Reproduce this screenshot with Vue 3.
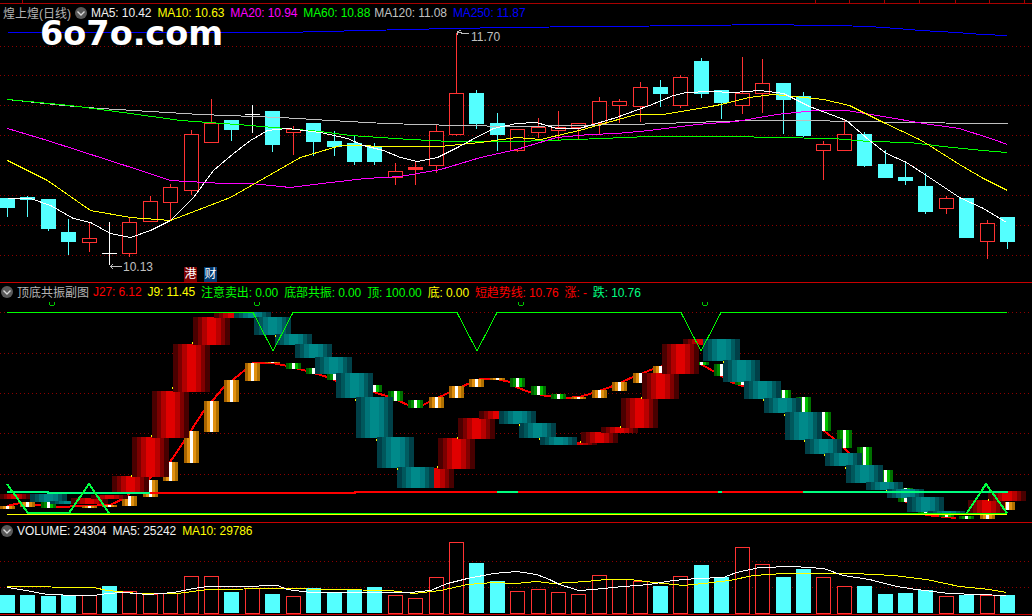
<template>
  <div class="screen">
    <!-- K线主图 -->
    <section class="pane pane-main">
      <svg class="ruler" width="1032" height="4" shape-rendering="crispEdges">
        <line x1="0" y1="3.5" x2="1032" y2="3.5" class="line-frame" />
        <line v-for="x in rulerTicks" :key="x" :x1="x + 0.5" y1="0" :x2="x + 0.5" y2="3" class="line-frame" />
      </svg>
      <div class="legend legend-main">
        <span class="title">煌上煌(日线)</span>
        <svg class="chev chev-main" width="14" height="14" viewBox="0 0 14 14"><circle cx="7" cy="7" r="6" fill="#5a5a5a" /><path d="M3.5 5.5 7 9l3.5-3.5" fill="none" stroke="#d8d8d8" stroke-width="1.4" /></svg>
        <span v-for="m in mainLegend" :key="m.label" class="item" :class="m.cls">{{ m.label }}: {{ m.value }}</span>
      </div>
      <svg class="chart" width="1032" height="259" viewBox="0 23 1032 259" shape-rendering="crispEdges">
        <line v-for="y in mainGrid" :key="y" x1="0" :y1="y + 0.5" x2="1032" :y2="y + 0.5" class="grid" />
        <g v-for="c in candleBars" :key="c.i">
          <line :x1="c.mid" :y1="c.hi" :x2="c.mid" :y2="c.lo" :class="c.wick" />
          <rect v-if="c.kind === 'r'" :x="c.x + 0.5" :y="c.top + 0.5" width="14" :height="c.h" :class="c.body" />
          <rect v-else-if="c.kind === 'c'" :x="c.x" :y="c.top" width="15" :height="c.h" class="body-cyan" />
          <line v-else :x1="c.x" :y1="c.top + 0.5" :x2="c.x + 15" :y2="c.top + 0.5" class="wick-white" />
        </g>
        <g transform="translate(0.5 0.5)">
          <polyline :points="maBlue" class="ma blue" />
          <polyline :points="maGray" class="ma gray" />
          <polyline :points="maGreen" class="ma green" />
          <polyline :points="maMagenta" class="ma magenta" />
          <polyline :points="maYellow" class="ma yellow" />
          <polyline :points="maWhite" class="ma white" />
        </g>
        <path d="M457.5 31v4M457.5 32l4 1h7M457.5 32l3-2" class="mark" />
        <text x="471" y="41" class="price">11.70</text>
        <path d="M110 266.5h12M110 266.5l3-2M110 266.5l3 2" class="mark" />
        <text x="123" y="271" class="price">10.13</text>
      </svg>
      <div class="watermark">6o7o.com</div>
      <div class="badges"><span class="badge badge-hk">港</span><span class="badge badge-fin">财</span></div>
    </section>

    <!-- 顶底共振副图 -->
    <section class="pane pane-sub">
      <div class="legend legend-sub">
        <svg class="chev" width="14" height="14" viewBox="0 0 14 14"><circle cx="7" cy="7" r="6" fill="#5a5a5a" /><path d="M3.5 5.5 7 9l3.5-3.5" fill="none" stroke="#d8d8d8" stroke-width="1.4" /></svg>
        <span class="title title-sub">顶底共振副图</span>
        <span v-for="m in subLegend" :key="m.label" class="item" :class="m.cls">{{ m.label }}: {{ m.value }}</span>
      </div>
      <svg class="chart" width="1032" height="222" viewBox="0 300 1032 222" shape-rendering="crispEdges">
        <defs>
          <linearGradient v-for="g in gradients" :id="g.id" :key="g.id" x1="0" x2="1" y1="0" y2="0">
            <template v-for="(color, n) in g.colors" :key="n">
              <stop :offset="n / g.colors.length" :stop-color="color" />
              <stop :offset="(n + 1) / g.colors.length" :stop-color="color" />
            </template>
          </linearGradient>
        </defs>
        <line v-for="y in subGrid" :key="y" x1="0" :y1="y + 0.5" x2="1032" :y2="y + 0.5" class="grid" />
        <polyline :points="trendLine" class="trend" />
        <rect v-for="s in smallBlocks" :key="s.x" :x="s.x" :y="s.y" width="15" :height="s.h" :fill="s.fill" />
        <rect v-for="b in wideBlocks" :key="b.key" :x="b.x" :y="b.y" :width="b.w" :height="b.h" :fill="b.fill" />
        <rect v-for="t in cornerTicks" :key="t[0]" :x="t[0]" :y="t[1]" width="1" height="2" class="tick" />
        <polyline points="7,492 48,492 48,493 150,493" class="band spring" />
        <polyline points="150,493 355,493 355,492 497,492" class="band hot" />
        <polyline points="497,492 518,492" class="band spring" />
        <polyline points="518,492 718,492" class="band hot" />
        <polyline points="718,492 722,492" class="band spring" />
        <polyline points="722,492 803,492" class="band hot" />
        <polyline points="803,492 1008,492" class="band spring" />
        <line x1="7" y1="514.5" x2="1007" y2="514.5" class="ma yellow" />
        <line x1="28" y1="513.5" x2="1007" y2="513.5" class="ma lime" />
        <polyline points="7,312.5 253,312.5 273,351 293,312.5 457,312.5 477,351 497,312.5 681,312.5 701,351 721,312.5 1007,312.5" class="ma lime" />
        <polyline points="7,484 28,513 69,513 89,484 109,513" class="tri" />
        <polyline points="967,513 986,484 1007,513" class="tri" />
        <path v-for="x in cupMarks" :key="x" :d="`M${x}.5 302V305M${x + 1} 305.5H${x + 5}M${x + 5}.5 305V302`" class="cup" />
      </svg>
    </section>

    <!-- 成交量 -->
    <section class="pane pane-volume">
      <div class="legend legend-volume">
        <svg class="chev" width="14" height="14" viewBox="0 0 14 14"><circle cx="7" cy="7" r="6" fill="#5a5a5a" /><path d="M3.5 5.5 7 9l3.5-3.5" fill="none" stroke="#d8d8d8" stroke-width="1.4" /></svg>
        <span class="item white-text">VOLUME: 24304</span>
        <span class="item white-text">MA5: 25242</span>
        <span class="item yellow-text">MA10: 29786</span>
      </div>
      <svg class="chart" width="1032" height="74" viewBox="0 540 1032 74" shape-rendering="crispEdges">
        <line v-for="y in [561, 587]" :key="y" x1="0" :y1="y + 0.5" x2="1032" :y2="y + 0.5" class="grid" />
        <template v-for="b in volumeBars" :key="b.x">
          <rect v-if="b.up" :x="b.x + 0.5" :y="b.y + 0.5" width="14" :height="b.h" class="vol-up" />
          <rect v-else :x="b.x" :y="b.y" width="15" :height="b.h" class="vol-down" />
        </template>
        <g transform="translate(0.5 0.5)">
          <polyline :points="volYellow" class="ma yellow" />
          <polyline :points="volWhite" class="ma white" />
        </g>
      </svg>
    </section>
  </div>
</template>

<script setup>
const STEP = 20.408
const left = (i) => Math.round(i * STEP)

const rulerTicks = [22, 815, 849, 884, 919, 955, 989, 1024]
const mainGrid = [46, 75, 105, 135, 165, 195, 225, 255]
const subGrid = [312, 353, 393, 433, 474]

const mainLegend = [
  { label: 'MA5', value: '10.42', cls: 'white-text' },
  { label: 'MA10', value: '10.63', cls: 'yellow-text' },
  { label: 'MA20', value: '10.94', cls: 'magenta-text' },
  { label: 'MA60', value: '10.88', cls: 'green-text' },
  { label: 'MA120', value: '11.08', cls: 'gray-text narrow' },
  { label: 'MA250', value: '11.87', cls: 'blue-text' }
]

const subLegend = [
  { label: 'J27', value: '6.12', cls: 'red-text' },
  { label: 'J9', value: '11.45', cls: 'yellow-text' },
  { label: '注意卖出', value: '0.00', cls: 'green-text' },
  { label: '底部共振', value: '0.00', cls: 'green-text' },
  { label: '顶', value: '100.00', cls: 'green-text' },
  { label: '底', value: '0.00', cls: 'yellow-text' },
  { label: '短趋势线', value: '10.76', cls: 'red-text' },
  { label: '涨', value: '-', cls: 'red-text' },
  { label: '跌', value: '10.76', cls: 'spring-text' }
]

// top, bottom, high, low, kind (r 阳线, c 阴线, w 十字星)
const candles = [
  [198, 207, 198, 217, 'c'], [197, 199, 196, 217, 'c'], [199, 228, 199, 231, 'c'], [232, 241, 219, 255, 'c'],
  [238, 242, 223, 252, 'r'], [253, 253, 222, 265, 'w'], [222, 253, 217, 257, 'r'], [201, 221, 196, 221, 'r'],
  [187, 202, 184, 220, 'r'], [134, 190, 130, 195, 'r'], [123, 142, 99, 142, 'r'], [120, 129, 120, 141, 'c'],
  [114, 114, 105, 133, 'w'], [111, 144, 111, 152, 'c'], [129, 132, 126, 155, 'r'], [123, 141, 123, 156, 'c'],
  [141, 146, 131, 156, 'c'], [143, 161, 135, 165, 'c'], [146, 161, 143, 165, 'c'], [171, 177, 163, 185, 'r'],
  [167, 169, 162, 185, 'r'], [131, 165, 125, 173, 'r'], [93, 134, 33, 136, 'r'], [93, 123, 90, 129, 'c'],
  [123, 134, 113, 151, 'c'], [129, 150, 129, 152, 'r'], [127, 132, 118, 138, 'r'], [127, 130, 111, 140, 'r'],
  [123, 127, 123, 140, 'r'], [101, 123, 97, 135, 'r'], [101, 105, 99, 123, 'r'], [87, 106, 82, 122, 'r'],
  [87, 93, 80, 107, 'c'], [77, 105, 75, 108, 'r'], [61, 93, 58, 98, 'c'], [90, 102, 90, 119, 'c'],
  [93, 105, 57, 114, 'r'], [83, 93, 59, 113, 'r'], [83, 99, 83, 134, 'c'], [96, 135, 92, 137, 'c'],
  [144, 150, 141, 180, 'r'], [134, 150, 120, 150, 'r'], [134, 165, 132, 167, 'c'], [164, 177, 150, 177, 'c'],
  [177, 180, 161, 185, 'c'], [186, 211, 173, 214, 'c'], [198, 208, 196, 214, 'r'], [198, 237, 198, 237, 'c'],
  [223, 241, 220, 259, 'r'], [217, 241, 217, 249, 'c']
]

const candleBars = candles.map(([top, bottom, hi, lo, kind], i) => {
  const x = left(i)
  const isRed = kind === 'r'
  return {
    i, x, kind, top, hi, lo,
    mid: x + 7.5,
    h: isRed ? bottom - top : bottom - top + 1,
    wick: kind === 'w' ? 'wick-white' : isRed ? 'wick-red' : 'wick-cyan',
    body: bottom - top < 3 ? 'body-solid' : 'body-red'
  }
})

const maBlue = '7,32 283,32 323,31 365,30 450,28 510,27 589,26 711,25 752,24 834,25 869,26 896,28 921,30 956,32 982,34 1007,35'
const maGray = '7,99 63,105 100,108 200,114 280,117 330,120 385,123 456,125 516,126 629,124 691,122 749,120 809,120 849,121 976,123 1007,123'
const maGreen = '7,99 70,105 130,113 180,120 250,125 320,131 350,135 410,139 450,141 516,141 576,139 649,136 733,136 773,137 832,138 869,141 909,142 943,146 982,150 1007,152'
const maMagenta = '7,128 47,140 140,170 170,180 223,183 250,183 290,187 330,182 365,178 400,176 440,169 480,157 516,149 556,137 589,134 616,133 649,130 696,124 736,121 776,114 816,110 846,110 883,116 923,123 959,128 993,139 1007,144'
const maYellow = '7,160 47,180 90,210 130,217 170,220 230,197 300,157 340,145 400,146 440,146 480,142 516,137 540,139 583,129 596,125 636,114 663,114 716,105 749,97 773,94 793,96 823,99 849,105 883,122 919,139 929,145 959,164 983,178 1007,190'
const maWhite = '7,198 30,198 50,205 73,218 90,222 110,233 130,237 150,230 170,220 193,197 213,170 233,153 250,140 267,130 287,128 320,132 347,138 363,145 383,150 400,157 417,161 437,157 457,147 470,140 493,128 516,123 536,122 556,128 579,128 596,123 616,117 649,105 673,95 686,92 709,91 733,92 759,90 783,93 809,106 846,120 869,140 886,153 906,162 926,175 959,197 983,208 1006,222'

const RED_BANDS = ['#4a0000', '#7a0000', '#b00000', '#e00000', '#e00000', '#b80000', '#800000', '#480000']
const TEAL_BANDS = ['#004048', '#00585c', '#007478', '#008a8a', '#008a8a', '#007c80', '#005c60', '#004048']
const ORANGE_BANDS = ['#a86400', '#e09010', '#ffffff', '#e09010', '#b07000']
const GREEN_BANDS = ['#006000', '#009000', '#ffffff', '#00c000', '#007000']

const gradients = [
  { id: 'gr', colors: RED_BANDS },
  { id: 'gt', colors: TEAL_BANDS },
  { id: 'go', colors: ORANGE_BANDS },
  { id: 'gg', colors: GREEN_BANDS }
]

// x1, x2, y1, y2, kind
const wide = [
  [0, 30, 494, 499, 'r'], [30, 67, 494, 502, 't'], [50, 87, 501, 504, 't'], [71, 108, 498, 504, 'r'], [91, 128, 495, 499, 'r'],
  [112, 149, 476, 492, 'r'], [132, 169, 437, 477, 'r'], [152, 189, 391, 438, 'r'], [173, 210, 344, 392, 'r'], [193, 230, 317, 345, 'r'],
  [214, 251, 313, 318, 'r'], [234, 271, 312, 318, 't'], [254, 291, 317, 335, 't'], [275, 312, 334, 345, 't'], [295, 332, 344, 358, 't'],
  [315, 352, 357, 374, 't'], [336, 373, 373, 398, 't'], [356, 393, 397, 438, 't'], [377, 414, 437, 468, 't'], [417, 454, 468, 488, 'r'],
  [397, 434, 467, 488, 't'], [438, 475, 438, 469, 'r'], [458, 495, 418, 439, 'r'], [479, 516, 411, 419, 'r'], [499, 536, 411, 424, 't'],
  [519, 556, 423, 438, 't'], [560, 597, 442, 445, 'r'], [540, 577, 437, 445, 't'], [581, 618, 432, 443, 'r'], [601, 638, 427, 433, 'r'],
  [621, 658, 398, 428, 'r'], [642, 679, 373, 399, 'r'], [683, 720, 339, 345, 'r'], [662, 699, 344, 374, 'r'], [703, 740, 339, 361, 't'],
  [723, 760, 360, 382, 't'], [744, 781, 381, 399, 't'], [764, 801, 398, 413, 't'], [785, 822, 412, 440, 't'], [805, 842, 439, 454, 't'],
  [825, 862, 453, 466, 't'], [846, 883, 465, 483, 't'], [866, 903, 482, 490, 't'], [887, 924, 489, 498, 't'], [907, 944, 497, 512, 't'],
  [928, 965, 511, 514, 't'], [968, 1005, 500, 514, 'r'], [988, 1026, 491, 501, 'r']
]

const wideBlocks = wide.map(([x1, x2, y1, y2, kind], n) => ({
  key: n, x: x1, y: y1, w: x2 - x1, h: y2 - y1,
  fill: kind === 'r' ? 'url(#gr)' : 'url(#gt)'
}))

// index, y1, y2, kind
const small = [
  [0, 506, 509, 'o'], [1, 502, 507, 'o'], [2, 502, 508, 'g'], [4, 506, 508, 'o'], [5, 505, 507, 'o'], [6, 496, 506, 'o'],
  [7, 480, 497, 'o'], [8, 462, 481, 'o'], [9, 431, 463, 'o'], [10, 401, 432, 'o'], [11, 380, 402, 'o'], [12, 363, 381, 'o'],
  [13, 362, 363, 'o'], [14, 363, 369, 'g'], [15, 368, 374, 'g'], [16, 374, 380, 'g'], [18, 385, 392, 'g'], [19, 391, 401, 'g'],
  [20, 400, 408, 'g'], [21, 397, 408, 'o'], [22, 386, 398, 'o'], [23, 379, 387, 'o'], [24, 378, 380, 'o'], [25, 378, 387, 'g'],
  [26, 386, 395, 'g'], [27, 394, 399, 'g'], [28, 397, 399, 'o'], [29, 390, 398, 'o'], [30, 382, 391, 'o'], [31, 373, 383, 'o'],
  [32, 366, 373, 'o'], [34, 362, 365, 'g'], [35, 364, 376, 'g'], [36, 382, 385, 'g'], [38, 390, 398, 'g'], [39, 397, 412, 'g'],
  [40, 412, 431, 'g'], [41, 430, 448, 'g'], [42, 447, 465, 'g'], [43, 470, 482, 'g'], [44, 488, 502, 'g'], [45, 512, 514, 'g'],
  [46, 514, 517, 'g'], [47, 516, 519, 'g'], [48, 514, 519, 'o'], [49, 502, 510, 'o']
]

const smallBlocks = small.map(([i, y1, y2, kind]) => ({
  x: left(i), y: y1, h: y2 - y1,
  fill: kind === 'o' ? 'url(#go)' : 'url(#gg)'
}))

const trendLine = '7,506 20,503 57,507 110,505 123,499 150,478 170,462 183,443 203,412 223,388 245,370 253,363 273,363 287,366 307,371 327,377 353,388 373,392 390,397 408,405 423,405 448,393 470,383 480,379 497,379 510,382 516,387 529,392 546,396 566,398 579,397 593,393 613,386 633,377 653,369 663,366 699,363 713,371 733,383 743,386 823,430 833,438 849,453 903,500 926,515 956,518'

const cornerTicks = [
  [192, 342], [172, 387], [151, 435], [131, 475], [275, 335], [355, 399], [376, 439], [397, 468], [437, 466], [457, 437],
  [519, 424], [539, 438], [580, 441], [620, 426], [641, 397], [723, 361], [763, 399], [784, 414], [804, 440], [824, 454],
  [845, 467], [886, 490], [988, 499]
]

const cupMarks = [49, 254, 518, 702]

const volumeTops = [
  595, 595, 596, 595, 595, 586, 591, 594, 593, 576, 576, 592, 588, 594, 596, 588, 593, 589, 587, 595, 598, 577, 542, 563, 581,
  591, 589, 592, 594, 575, 579, 581, 586, 576, 565, 577, 547, 564, 577, 569, 577, 586, 586, 594, 593, 590, 596, 595, 595, 595
]

const RED_VOLUME = [4, 6, 7, 8, 9, 10, 12, 14, 19, 20, 21, 22, 25, 26, 27, 28, 29, 30, 31, 33, 36, 37, 40, 41, 46, 48]

const volumeBars = volumeTops.map((y, i) => ({
  x: left(i), y, h: 613 - y, up: RED_VOLUME.includes(i)
}))

const volWhite = '7,587 20,589 47,594 77,595 93,595 107,593 123,592 147,594 173,592 193,588 207,586 242,586 277,585 287,589 310,592 363,592 383,592 410,592 430,590 447,583 467,578 493,573 516,571 536,574 549,579 559,584 578,590 593,589 623,586 649,584 673,580 696,578 723,577 736,572 759,567 793,566 823,568 843,575 869,579 896,586 916,589 949,593 1006,595'
const volYellow = '7,586 93,587 107,590 137,593 177,593 207,589 280,588 333,589 390,590 413,593 440,590 467,584 493,582 516,583 536,581 553,583 586,581 606,579 629,579 653,582 683,585 703,583 729,580 753,575 783,573 816,573 853,573 893,575 926,579 959,586 989,589 1006,592'
</script>

<style>
html,
body {
  background: #000;
}
</style>

<style scoped>
.screen {
  width: 1032px;
  height: 616px;
  background: #000;
  overflow: hidden;
  display: flex;
  flex-direction: column;
  font-family: "Liberation Sans", "Noto Sans CJK SC", sans-serif;
  font-size: 12px;
}

.pane {
  position: relative;
  display: flex;
  flex-direction: column;
  box-sizing: border-box;
  border-bottom: 1px solid #c80000;
  flex: none;
}

.pane-main {
  height: 283px;
}

.pane-sub {
  height: 240px;
}

.pane-volume {
  height: 92px;
}

.ruler,
.chart {
  display: block;
  flex: none;
}

.legend {
  display: flex;
  align-items: center;
  gap: 6px;
  white-space: nowrap;
  flex: none;
  box-sizing: border-box;
}

.legend-main {
  height: 19px;
  padding: 0 0 2px 3px;
}

.legend-sub {
  height: 17px;
}

.legend-volume {
  height: 17px;
  padding-bottom: 2px;
}

.title {
  color: #b4b4b4;
}

.title-sub {
  margin-right: -2px;
}

.chev {
  flex: none;
  margin-right: -3px;
}

.chev-main {
  margin-left: -3px;
}

.item {
  letter-spacing: -0.1px;
}

.narrow {
  margin-left: -2px;
}

.white-text { color: #f0f0f0; }
.yellow-text { color: #ffff00; }
.magenta-text { color: #ff00ff; }
.green-text { color: #00ff00; }
.gray-text { color: #c0c0c0; }
.blue-text { color: #0000ff; }
.red-text { color: #ff0000; }
.spring-text { color: #00ff80; }

.watermark {
  position: absolute;
  left: 40px;
  top: 20px;
  color: #fff;
  font-family: "DejaVu Sans", sans-serif;
  font-weight: 700;
  font-size: 33.5px;
  line-height: 27px;
}

.badges {
  position: absolute;
  left: 184px;
  bottom: 0;
  display: flex;
  gap: 7px;
}

.badge {
  width: 13px;
  height: 15px;
  line-height: 15px;
  text-align: center;
  color: #fff;
}

.badge-hk { background: #7a0000; }
.badge-fin { background: #003a70; }

.line-frame { stroke: #a80000; }
.grid { stroke: #8c0000; stroke-dasharray: 1 3; }

.wick-red { stroke: #ff3232; }
.wick-cyan { stroke: #54ffff; }
.wick-white { stroke: #fff; }
.body-red { fill: #000; stroke: #ff3232; }
.body-solid { fill: #ff3232; stroke: #ff3232; }
.body-cyan { fill: #54ffff; }

.ma { fill: none; stroke-width: 1; }
.blue { stroke: #0000ff; }
.gray { stroke: #c0c0c0; }
.green { stroke: #00ff00; }
.magenta { stroke: #ff00ff; }
.yellow { stroke: #ffff00; }
.white { stroke: #fff; }
.lime { stroke: #00ff00; }

.mark { fill: none; stroke: #c0c0c0; }
.price { fill: #c0c0c0; font-size: 12px; }

.trend { fill: none; stroke: #ff0000; stroke-width: 2; }
.tick { fill: #ffff00; }
.band { fill: none; stroke-width: 2; }
.hot { stroke: #ff0000; }
.spring { stroke: #00ff80; }
.tri { fill: none; stroke: #00ff40; stroke-width: 2; }
.cup { fill: none; stroke: #00c800; }

.vol-up { fill: #000; stroke: #ff3232; }
.vol-down { fill: #54ffff; }
</style>
